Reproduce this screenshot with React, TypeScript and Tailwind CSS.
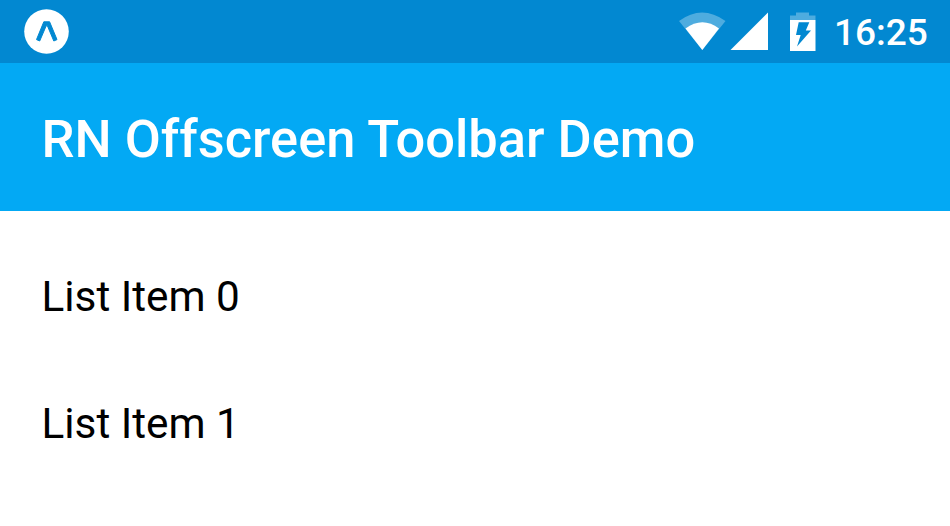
function StatusBar() {
  return (
    <div className="flex h-[63px] items-center bg-[#0288d1] text-white">
      <svg className="ml-6 h-[63px] w-[46px]" viewBox="24 0 46 63">
        <circle cx="46.5" cy="31.5" r="22.3" fill="white" />
        <path d="M36.500 39.600L43.800 21.800H49.600L57 39.600L53.800 41L47.400 25.800H46.200L39.700 41Z" fill="#0288d1" stroke="#0288d1" strokeWidth="1" strokeLinejoin="round" />
      </svg>
      <svg className="ml-auto h-[63px] w-[140px]" viewBox="678 0 140 63">
        <path d="M679 21Q702 4 725.5 21L702.3 50Z" fill="white" opacity=".3" />
        <path d="M685.500 28.500Q702.500 16 719 28.500L702.300 50Z" fill="white" />
        <path d="M768 12.500V50H730.500Z" fill="white" />
        <path d="M790 20V15.500H796V12.500H809V15.500H815.500V20Z" fill="white" opacity=".3" />
        <path d="M790 20H815.500V51H790Z" fill="white" />
        <path d="M798.700 22.300H809.300L805.800 30.600H811L797 46.500L800.700 35H796Z" fill="#0288d1" />
      </svg>
      <span className="ml-4 mr-[22px] w-[94px] pt-px text-[37px] font-medium leading-none">16:25</span>
    </div>
  );
}

export default function App() {
  return (
    <div className="h-[526px] w-[950px] overflow-hidden bg-white font-['Roboto',sans-serif] text-black">
      <StatusBar />
      <header className="flex h-[148px] items-center bg-[#03a9f4] pt-[4px] pl-[41.5px] text-white">
        <h1 className="text-[52.4px] font-medium leading-none">RN Offscreen Toolbar Demo</h1>
      </header>
      <ul className="pt-[22px] pl-[41.5px] text-[42.3px]">
        <li className="flex h-[127px] items-center">List Item 0</li>
        <li className="flex h-[127px] items-center">List Item 1</li>
      </ul>
    </div>
  );
}
